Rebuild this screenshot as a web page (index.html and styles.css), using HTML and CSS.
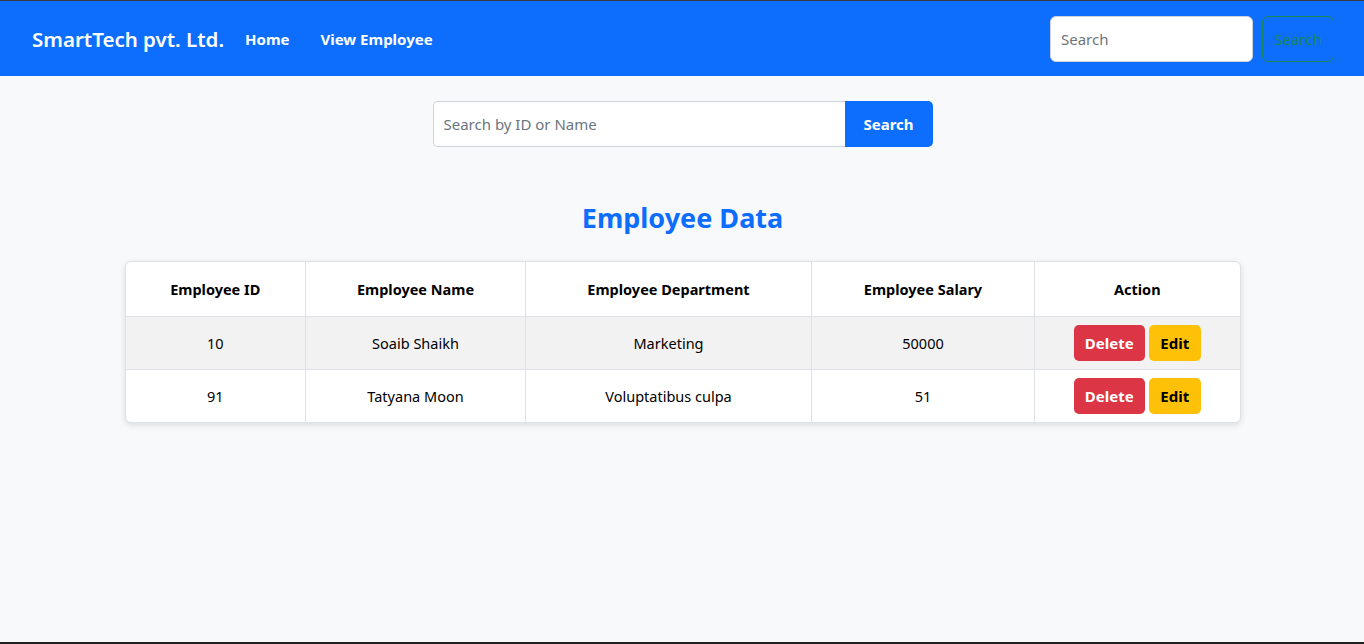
FILE: index.html
```html
<!DOCTYPE html>
<html lang="en">
<head>
<meta charset="utf-8">
<title>SmartTech pvt. Ltd.</title>
<link rel="stylesheet" href="styles.css">
</head>
<body>
<div class="topline"></div>
<nav class="navbar">
  <div class="nav-left">
    <span class="brand">SmartTech pvt. Ltd.</span>
    <a class="nav-link" href="#">Home</a>
    <a class="nav-link" href="#">View Employee</a>
  </div>
  <form class="nav-search">
    <input class="nav-input" type="text" placeholder="Search">
    <button class="btn-outline" type="button">Search</button>
  </form>
</nav>
<main class="main">
  <div class="search-group">
    <input class="search-input" type="text" placeholder="Search by ID or Name">
    <button class="search-btn" type="button">Search</button>
  </div>
  <h2 class="title">Employee Data</h2>
  <div class="table-wrap">
    <table class="data-table">
      <colgroup>
        <col class="c1"><col class="c2"><col class="c3"><col class="c4"><col class="c5">
      </colgroup>
      <thead>
        <tr><th>Employee ID</th><th>Employee Name</th><th>Employee Department</th><th>Employee Salary</th><th>Action</th></tr>
      </thead>
      <tbody>
        <tr class="striped"><td>10</td><td>Soaib Shaikh</td><td>Marketing</td><td>50000</td>
          <td><div class="actions"><button class="btn-del">Delete</button><button class="btn-edit">Edit</button></div></td></tr>
        <tr><td>91</td><td>Tatyana Moon</td><td>Voluptatibus culpa</td><td>51</td>
          <td><div class="actions"><button class="btn-del">Delete</button><button class="btn-edit">Edit</button></div></td></tr>
      </tbody>
    </table>
  </div>
</main>
<div class="taskbar"></div>
</body>
</html>
```
FILE: styles.css
```css
* { box-sizing: border-box; }
html, body { height: 100%; }
body {
  margin: 0;
  background: #f8f9fa;
  font-family: "Noto Sans", "Open Sans", sans-serif;
  color: #000;
  display: flex;
  flex-direction: column;
  height: 644px;
  overflow: hidden;
}
.topline { height: 1px; background: #3a3a3a; flex: none; }
.navbar {
  flex: none;
  height: 75px;
  background: #0d6efd;
  display: flex;
  align-items: center;
  justify-content: space-between;
  padding: 0 30px 0 32px;
}
.nav-left { display: flex; align-items: center; }
.brand { color: #fff; font-size: 20.5px; font-weight: 600; margin-right: 21px; }
.nav-link { color: #fff; font-weight: 700; font-size: 15px; text-decoration: none; margin-right: 31px; }
.nav-search { display: flex; align-items: center; gap: 9px; margin: 0; }
.nav-input {
  width: 203px; height: 46px;
  border: 1px solid #ced4da; border-radius: 6px;
  padding: 0 10px; font: inherit; font-size: 15px; background: #fff;
}
.nav-input::placeholder { color: #6c757d; }
.btn-outline {
  width: 72px; height: 46px;
  border: 1px solid #198754; border-radius: 6px;
  background: transparent; color: #198754;
  font: inherit; font-size: 15px; padding: 0;
}
.main { flex: 1; display: flex; flex-direction: column; align-items: center; padding: 25px 0 0 1px; }
.search-group { display: flex; width: 500px; height: 46px; }
.search-input {
  flex: 1; border: 1px solid #ced4da; border-right: none;
  border-radius: 5px 0 0 5px; padding: 0 10px; font: inherit; font-size: 15px; background: #fff;
}
.search-input::placeholder { color: #6c757d; }
.search-btn {
  width: 88px; border: none; border-radius: 0 5px 5px 0;
  background: #0d6efd; color: #fff; font: inherit; font-weight: 700; font-size: 15px;
}
.title {
  color: #0d6efd; font-size: 27px; font-weight: 700; margin: 53px 0 25px; line-height: 36px;
}
.table-wrap {
  width: 1116px; border-radius: 6px; background: #fff;
  box-shadow: 0 2px 6px rgba(0,0,0,0.12); overflow: hidden;
  border: 1px solid #dee2e6;
}
.data-table { width: 100%; border-collapse: collapse; table-layout: fixed; font-size: 14.5px; }
.c1 { width: 180px; } .c2 { width: 220px; } .c3 { width: 286px; } .c4 { width: 223px; } .c5 { width: auto; }
.data-table th, .data-table td {
  text-align: center; border-right: 1px solid #dee2e6; border-bottom: 1px solid #dee2e6; padding: 0 8px;
}
.data-table th:last-child, .data-table td:last-child { border-right: none; }
.data-table tbody tr:last-child td { border-bottom: none; }
.data-table th { height: 54px; font-weight: 700; }
.data-table td { height: 53px; }
.striped td { background: #f2f2f2; }
.actions { display: flex; justify-content: center; gap: 4px; }
.btn-del, .btn-edit {
  height: 36px; border: none; border-radius: 5px; font: inherit; font-weight: 700; font-size: 15px; padding: 0;
}
.btn-del { width: 71px; background: #dc3545; color: #fff; }
.btn-edit { width: 52px; background: #ffc107; color: #000; }
.taskbar { flex: none; height: 2px; background: #1f1f1f; }
```
